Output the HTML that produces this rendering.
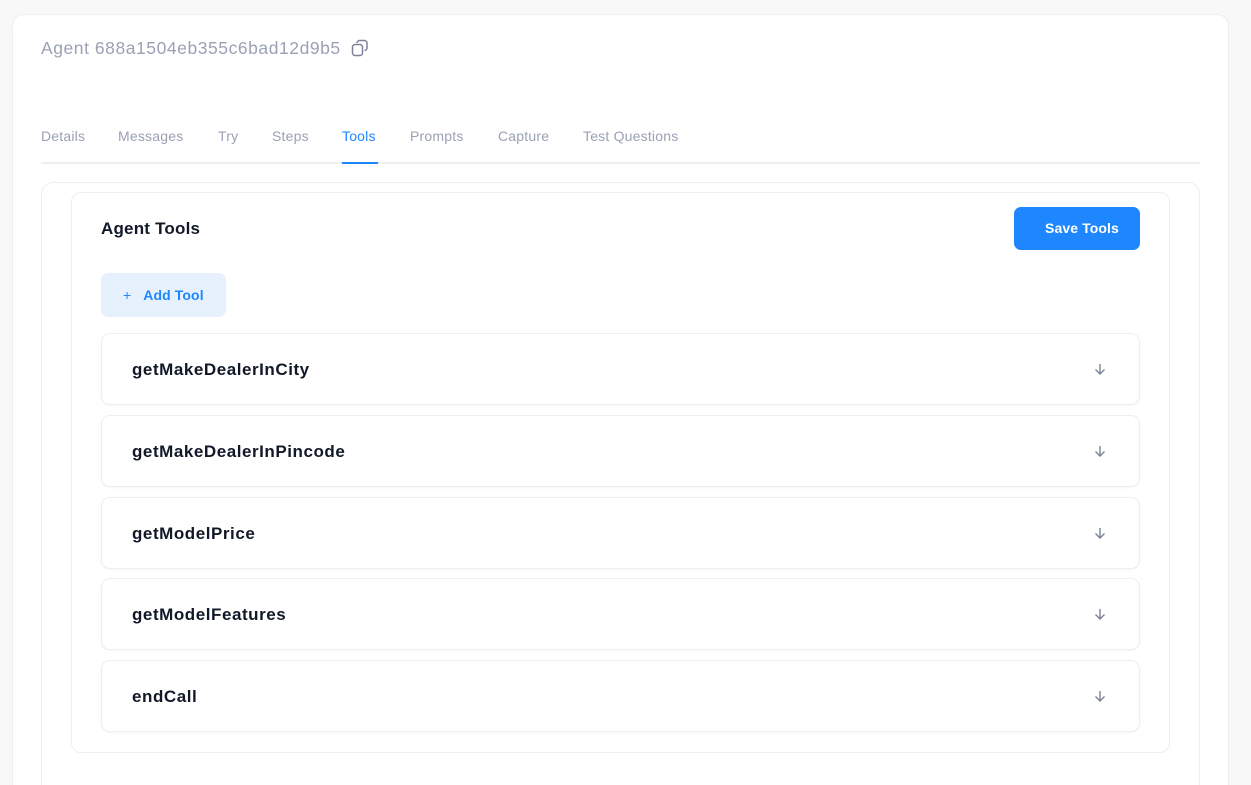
<!DOCTYPE html>
<html style="height:785px;overflow:hidden"><head><style>
*{box-sizing:border-box;margin:0;padding:0}
body{width:1251px;height:785px;background:#f8f8f8;font-family:"Liberation Sans",sans-serif;overflow:hidden;position:relative}
.outer{position:absolute;left:12px;top:14px;width:1217px;height:800px;background:#fff;border:1px solid #eee;border-radius:12px}
.title{position:absolute;left:41px;top:38px;font-size:17.5px;color:#9aa1b5;letter-spacing:0.55px}
.copy{position:absolute;left:351px;top:39px}
.tabs{position:absolute;left:41px;top:126px;width:1159px;height:38px;border-bottom:2px solid #eceef1}
.tab{position:absolute;top:2px;font-size:14px;color:#9aa1b5;letter-spacing:0.2px}
.tab.on{color:#1e87ff}
.ul{position:absolute;left:342px;top:162px;width:36px;height:2px;background:#1e87ff}
.c1{position:absolute;left:41px;top:182px;width:1159px;height:620px;border:1px solid #eceef1;border-radius:12px}
.c2{position:absolute;left:71px;top:192px;width:1099px;height:561px;border:1px solid #eceef1;border-radius:10px;background:#fff}
.h{position:absolute;left:101px;top:219px;font-size:17px;font-weight:bold;color:#111827;letter-spacing:0.2px}
.save{position:absolute;left:1014px;top:207px;width:126px;height:43px;background:#1e87ff;border-radius:7px;color:#fff;font-size:14px;font-weight:bold;line-height:43px;padding-left:31px;letter-spacing:0.1px}
.add{position:absolute;left:101px;top:273px;width:125px;height:44px;background:#e7f1fe;border-radius:7px;color:#1e87ff;font-size:14px;font-weight:bold;line-height:44px;padding-left:22px;letter-spacing:0.1px}
.item{position:absolute;left:101px;width:1039px;height:72px;border:1px solid #eceef1;border-radius:9px;background:#fff;box-shadow:0 1px 2px rgba(0,0,0,.04)}
.item span{position:absolute;left:30px;top:26px;font-size:17px;font-weight:bold;color:#111827;letter-spacing:0.55px}
.item svg{position:absolute;left:991px;top:28px}
</style></head><body>
<div class="outer"></div>
<div class="title">Agent 688a1504eb355c6bad12d9b5</div>
<svg class="copy" width="18" height="18" viewBox="0 0 18 18" fill="none" stroke="#7c8396" stroke-width="1.5"><rect x="1.5" y="5.5" width="10" height="11" rx="2.5"/><path d="M6 4V4a2.5 2.5 0 0 1 2.5-2.5h5A2.5 2.5 0 0 1 16 4v5a2.5 2.5 0 0 1-2.5 2.5"/></svg>
<div class="tabs">
<span class="tab" style="left:0">Details</span>
<span class="tab" style="left:77px">Messages</span>
<span class="tab" style="left:177px">Try</span>
<span class="tab" style="left:231px">Steps</span>
<span class="tab on" style="left:301px">Tools</span>
<span class="tab" style="left:369px">Prompts</span>
<span class="tab" style="left:457px">Capture</span>
<span class="tab" style="left:542px">Test Questions</span>
</div>
<div class="ul"></div>
<div class="c1"></div>
<div class="c2"></div>
<div class="h">Agent Tools</div>
<div class="save">Save Tools</div>
<div class="add"><span style="font-weight:normal;margin-right:12px">+</span>Add Tool</div>
<div class="item" style="top:333px"><span>getMakeDealerInCity</span><svg width="14" height="14" viewBox="0 0 14 14" fill="none" stroke="#7c8396" stroke-width="1.4"><path d="M7 2v10M2.5 7.5 7 12l4.5-4.5"/></svg></div>
<div class="item" style="top:415px"><span>getMakeDealerInPincode</span><svg width="14" height="14" viewBox="0 0 14 14" fill="none" stroke="#7c8396" stroke-width="1.4"><path d="M7 2v10M2.5 7.5 7 12l4.5-4.5"/></svg></div>
<div class="item" style="top:497px"><span>getModelPrice</span><svg width="14" height="14" viewBox="0 0 14 14" fill="none" stroke="#7c8396" stroke-width="1.4"><path d="M7 2v10M2.5 7.5 7 12l4.5-4.5"/></svg></div>
<div class="item" style="top:578px"><span>getModelFeatures</span><svg width="14" height="14" viewBox="0 0 14 14" fill="none" stroke="#7c8396" stroke-width="1.4"><path d="M7 2v10M2.5 7.5 7 12l4.5-4.5"/></svg></div>
<div class="item" style="top:660px"><span>endCall</span><svg width="14" height="14" viewBox="0 0 14 14" fill="none" stroke="#7c8396" stroke-width="1.4"><path d="M7 2v10M2.5 7.5 7 12l4.5-4.5"/></svg></div>
</body></html>
